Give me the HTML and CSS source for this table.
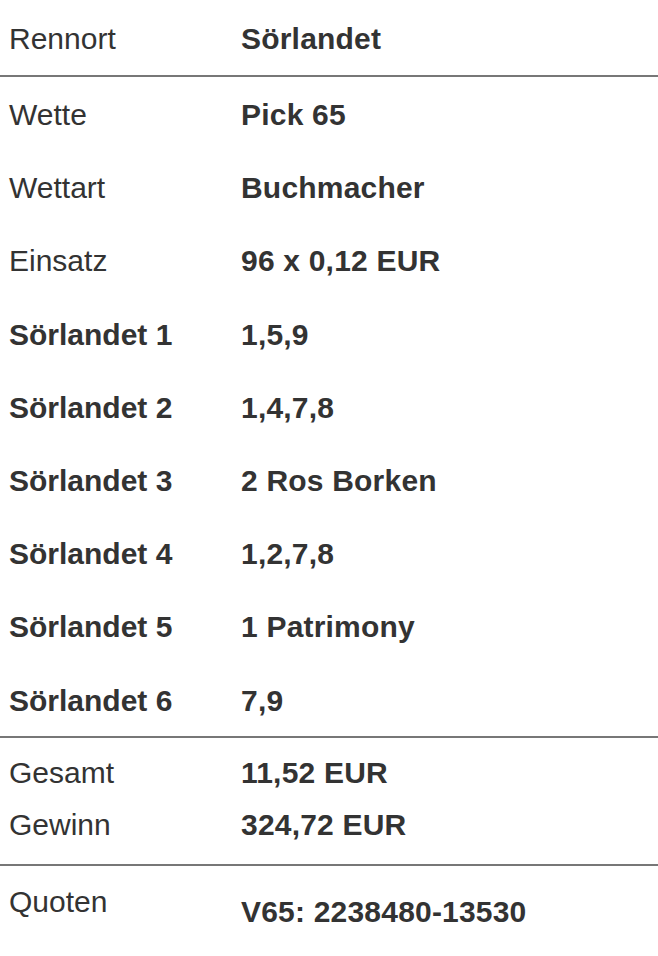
FILE: index.html
```html
<!DOCTYPE html>
<html lang="de">
  <head>
    <meta charset="UTF-8" />
    <meta name="viewport" content="width=device-width, initial-scale=1.0" />
    <title>Wettschein</title>
    <link rel="stylesheet" href="styles.css">
  </head>
  <body>
    <div class="ticket">
      <div class="section head">
        <div class="row">
          <span class="label">Rennort</span>
          <span class="value">Sörlandet</span>
        </div>
      </div>

      <div class="section legs">
        <div class="row">
          <span class="label">Wette</span>
          <span class="value">Pick 65</span>
        </div>
        <div class="row">
          <span class="label">Wettart</span>
          <span class="value">Buchmacher</span>
        </div>
        <div class="row">
          <span class="label">Einsatz</span>
          <span class="value">96 x 0,12 EUR</span>
        </div>
        <div class="row">
          <span class="label strong">Sörlandet 1</span>
          <span class="value">1,5,9</span>
        </div>
        <div class="row">
          <span class="label strong">Sörlandet 2</span>
          <span class="value">1,4,7,8</span>
        </div>
        <div class="row">
          <span class="label strong">Sörlandet 3</span>
          <span class="value">2 Ros Borken</span>
        </div>
        <div class="row">
          <span class="label strong">Sörlandet 4</span>
          <span class="value">1,2,7,8</span>
        </div>
        <div class="row">
          <span class="label strong">Sörlandet 5</span>
          <span class="value">1 Patrimony</span>
        </div>
        <div class="row">
          <span class="label strong">Sörlandet 6</span>
          <span class="value">7,9</span>
        </div>
      </div>

      <div class="section totals">
        <div class="row">
          <span class="label">Gesamt</span>
          <span class="value">11,52 EUR</span>
        </div>
        <div class="row">
          <span class="label">Gewinn</span>
          <span class="value">324,72 EUR</span>
        </div>
      </div>

      <div class="section odds">
        <div class="row">
          <span class="label">Quoten</span>
          <span class="value">V65: 2238480-13530</span>
        </div>
      </div>
    </div>
  </body>
</html>
```

FILE: styles.css
```css
*{
    margin: 0px;
    padding: 0px;
    box-sizing: border-box;
}
body{
    background: #fff;
    color: #333;
    font-family: "Liberation Sans", Arial, Helvetica, sans-serif;
    font-size: 30px;
}
.section{
    border-bottom: 2px solid #777;
}
.section:last-child{
    border-bottom: 0;
}
.row{
    display: grid;
    grid-template-columns: 241px 1fr;
    line-height: 34px;
}
.label{
    padding-left: 9px;
}
.strong, .value{
    font-weight: bold;
}
.value{
    letter-spacing: 0.2px;
}

.head .row{
    padding: 22px 0 19px;
}
.legs .row{
    padding: 21px 0 18.2px;
}
.totals{
    display: flex;
    flex-direction: column;
    gap: 18px;
    padding: 18px 0 22px;
}
.odds{
    padding: 19px 0 20px;
}
.odds .value{
    margin-top: 10px;
}
```
